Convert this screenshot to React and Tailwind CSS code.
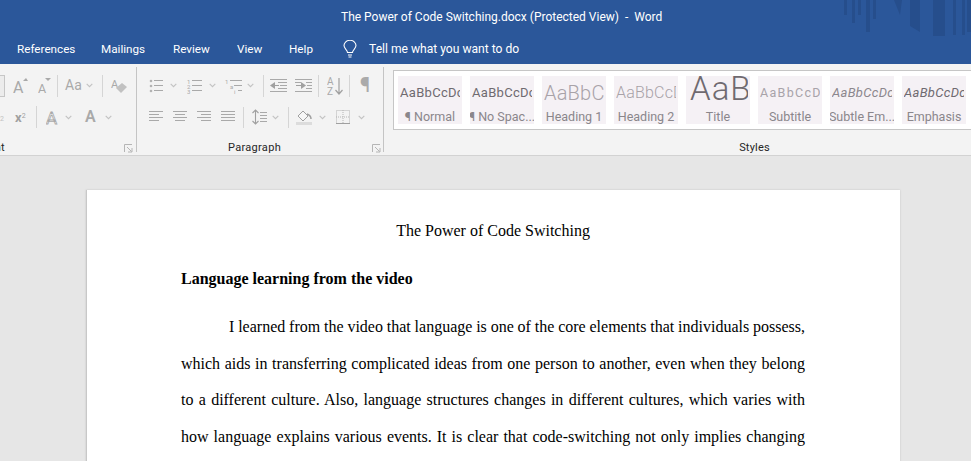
const G = '#a9a9a9';
const Chev = ({ ml = 0 }) => (
  <svg width="7" height="5" viewBox="0 0 7 5" style={{ marginLeft: ml }} className="shrink-0">
    <path d="M.7 .8 3.5 3.6 6.3 .8" fill="none" stroke="#c2c2c2" strokeWidth="1.1" />
  </svg>
);
const Sep = ({ ml, h = 22 }) => <div className="w-px bg-[#d5d5d5] shrink-0" style={{ marginLeft: ml, height: h }} />;
const Ic = ({ w, h = 16, ml = 0, children }) => (
  <svg width={w} height={h} viewBox={`0 0 ${w} ${h}`} style={{ marginLeft: ml }} className="shrink-0" fontFamily="Roboto, sans-serif">
    {children}
  </svg>
);
const Lines = ({ rows, x1 = 0, x2 = 14, c = G }) => rows.map((r, i) => {
  const [y, a, b] = Array.isArray(r) ? r : [r, x1, x2];
  return <path key={i} d={`M${a} ${y + .5}H${b}`} stroke={c} strokeWidth="1" />;
});
const Launcher = () => (
  <svg width="9" height="9" viewBox="0 0 9 9" className="shrink-0">
    <path d="M.5 8V.5H8M3 3 7.5 7.5M4 8H8V4" fill="none" stroke="#b5b5b5" strokeWidth="1" />
  </svg>
);
const styles = [
  ['AaBbCcDc', '¶ Normal', 'text-[13px] text-[#6f6a70] tracking-[.3px]'],
  ['AaBbCcDc', '¶ No Spac...', 'text-[13px] text-[#6f6a70] tracking-[.3px]'],
  ['AaBbCc', 'Heading 1', 'text-[20px] font-light text-[#a8a2a8] tracking-[.2px]'],
  ['AaBbCcD', 'Heading 2', 'text-[16px] font-light text-[#a8a2a8] tracking-[.2px]'],
  ['AaB', 'Title', 'text-[33px] font-light text-[#6f6a70] leading-none pl-[2px] tracking-[1px] -mt-[10px]'],
  ['AaBbCcD', 'Subtitle', 'text-[12.5px] text-[#a8a3a9] tracking-[1.3px]'],
  ['AaBbCcDc', 'Subtle Em...', 'text-[13px] italic text-[#8c878d] tracking-[.3px]'],
  ['AaBbCcDc', 'Emphasis', 'text-[13px] italic text-[#6f6a70] tracking-[.3px]'],
];
const paragraphs = [
  'which aids in transferring complicated ideas from one person to another, even when they belong',
  'to a different culture. Also, language structures changes in different cultures, which varies with',
  'how language explains various events. It is clear that code-switching not only implies changing',
];
const stripes = ['M844 0h3v15h-3z','M852 0h3v23h-3z','M858 0h3v15h-3z','M866 0h4v32h-4z','M873 0h3v19h-3z','M894 0h8l-2 15z','M910 0h10v32l-10-6z','M933 0h12v36h-12z','M953 0h3v35h-3z','M962 0h3v35h-3z','M967 0h4v32h-4z'];
const tabs = [['References', 'w-[84px]'], ['Mailings', 'w-[72px]'], ['Review', 'w-[64px]'], ['View', 'w-[52px]'], ['Help', 'w-[54px]']];

export default function App() {
  return (
    <div className="w-[971px] h-[461px] overflow-hidden bg-[#e6e6e6] flex flex-col font-['Roboto',sans-serif]">
      <header className="relative h-16 shrink-0 bg-[#2b579a] text-white">
        <svg width="128" height="36" viewBox="843 0 128 36" className="absolute right-0 top-0">
          {stripes.map((d, i) => <path key={i} d={d} fill="#264e8c" />)}
        </svg>
        <div className="h-[33px] pl-[341px] flex items-center text-[12px] whitespace-pre">The Power of Code Switching.docx (Protected View)  -  Word</div>
        <nav className="h-[31px] pt-[3px] pl-[17px] flex items-center text-[11.7px]">
          {tabs.map(([t, w]) => <span key={t} className={w}>{t}</span>)}
          <svg width="14" height="18" viewBox="0 0 14 18" className="shrink-0 -mt-[3px]">
            <path d="M4.5 12.5C4.5 10 1 8.5 1 5.6A6 5.3 0 0 1 13 5.6C13 8.500 9.500 10 9.500 12.500ZM5 15H9M5.500 17H8.500" fill="none" stroke="#fff" strokeWidth="1.100" />
          </svg>
          <span className="ml-3 text-[12.1px] -mt-[2px]">Tell me what you want to do</span>
        </nav>
      </header>

      <section className="h-[92px] shrink-0 bg-[#f3f3f3] border-b border-[#d2d2d2] flex text-[#262626]">
        <div className="w-[137px] shrink-0 border-r border-[#c4c4c4] my-[3px] flex flex-col">
          <div className="h-[37px] flex items-center">
            <div className="w-[5px] h-[22px] bg-[#ececec] border border-l-0 border-[#c6c6c6] shrink-0" />
            <Ic w={15} h={18} ml={8}><text x="0" y="16" fontSize="16" fill={G}>A</text><path d="M10 4 13 1 15 4Z" fill={G} /></Ic>
            <Ic w={13} h={18} ml={10}><text x="0" y="16" fontSize="12.500" fill={G}>A</text><path d="M7 1H13L10 4Z" fill={G} /></Ic>
            <Sep ml={6} />
            <span className="ml-[7px] w-[16px] text-[14px] text-[#a9a9a9]">Aa</span>
            <Chev ml={5} />
            <Sep ml={9} />
            <Ic w={16} h={18} ml={8}><text x="0" y="11" fontSize="11" fill={G}>A</text><path d="M5 11 11 6 16 10 10 16Z" fill="#c1c1c1" /></Ic>
          </div>
          <div className="h-[26px] flex items-center">
            <span className="text-[7px] text-[#c2c2c2] w-[5px] overflow-hidden mt-[4px] shrink-0">2</span>
            <span className="ml-[10px] w-[13px] text-[13px] font-bold text-[#a0a0a0] leading-none">x<sup className="text-[7px] font-normal">2</sup></span>
            <Sep ml={8} />
            <Ic w={14} h={16} ml={9}><text x="0" y="14.500" fontSize="17" fill="#fff" stroke={G} strokeWidth=".8">A</text></Ic>
            <Chev ml={5} />
            <span className="ml-[13px] w-[11px] text-[16px] font-semibold text-[#a9a9a9] leading-none">A</span>
            <Chev ml={9} />
          </div>
          <div className="mt-auto -mb-[3px] h-[14px] flex items-center justify-between pr-[3px] text-[11px]">
            <span className="-ml-[18px] tracking-[.2px]">Font</span>
            <Launcher />
          </div>
        </div>

        <div className="w-[247px] shrink-0 border-r border-[#c4c4c4] my-[3px] flex flex-col">
          <div className="h-[37px] flex items-center pl-[12px]">
            <Ic w={14} h={16}><circle cx="2" cy="3" r="1.300" fill="#b3b3b3" /><circle cx="2" cy="8" r="1.300" fill="#b3b3b3" /><circle cx="2" cy="13" r="1.300" fill="#b3b3b3" /><Lines x1={5} rows={[2, 7, 12]} /></Ic>
            <Chev ml={7} />
            <Ic w={15} h={16} ml={10}><text x="0" y="6" fontSize="6" fill={G}>1</text><text x="0" y="11" fontSize="6" fill={G}>2</text><text x="0" y="16" fontSize="6" fill={G}>3</text><Lines x1={5} x2={15} rows={[2, 7, 12]} /></Ic>
            <Chev ml={7} />
            <Ic w={18} h={16} ml={9}><text x="0" y="6" fontSize="6" fill={G}>1</text><text x="5" y="11" fontSize="6" fill={G}>a</text><text x="9" y="16" fontSize="6" fill={G}>i</text><Lines rows={[[2, 5, 17], [7, 9, 17], [12, 13, 17]]} /></Ic>
            <Chev ml={4} />
            <Sep ml={9} />
            <Ic w={17} h={14} ml={6}><path d="M0 6.500 5 3V10Z" fill="#a0a0a0" /><path d="M4 6H9V7H4Z" fill="#a0a0a0" /><Lines rows={[[0, 0, 17], [3, 8, 17], [6, 10, 17], [9, 8, 17], [12, 0, 17]]} /></Ic>
            <Ic w={17} h={14} ml={8}><path d="M11 6.500 6 3V10Z" fill="#a0a0a0" /><path d="M1 6H7V7H1Z" fill="#a0a0a0" /><Lines rows={[[0, 0, 17], [3, 0, 6], [3, 11, 17], [6, 12, 17], [9, 11, 17], [12, 0, 17]]} /></Ic>
            <Sep ml={6} />
            <Ic w={16} h={20} ml={8}><text x="0" y="9" fontSize="10" fill={G}>A</text><text x="0" y="19" fontSize="10" fill={G}>Z</text><path d="M12 2V17M8.500 14 12 18 15.500 14" fill="none" stroke="#a0a0a0" strokeWidth="1.200" /></Ic>
            <Sep ml={6} />
            <span className="ml-[10px] text-[21px] text-[#aaaaaa] leading-none">¶</span>
          </div>
          <div className="h-[26px] flex items-center pl-[12px]">
            <Ic w={14} h={12}><Lines rows={[[0, 0, 14], [3, 0, 10], [6, 0, 14], [9, 0, 10]]} /></Ic>
            <Ic w={14} h={12} ml={10}><Lines rows={[[0, 0, 14], [3, 2, 12], [6, 0, 14], [9, 2, 12]]} /></Ic>
            <Ic w={14} h={12} ml={10}><Lines rows={[[0, 0, 14], [3, 4, 14], [6, 0, 14], [9, 4, 14]]} /></Ic>
            <Ic w={14} h={12} ml={10}><Lines rows={[0, 3, 6, 9]} /></Ic>
            <Sep ml={8} h={21} />
            <Ic w={15} h={16} ml={8}><path d="M3.500 1V15M.5 4 3.500 1 6.500 4M.5 12 3.500 15 6.500 12" fill="none" stroke="#a0a0a0" strokeWidth="1.100" /><Lines x1={8} x2={15} rows={[3, 6, 9, 12]} /></Ic>
            <Chev ml={5} />
            <Sep ml={9} h={21} />
            <Ic w={16} h={16} ml={7}><path d="M2 7 7 2 12 7 7 12Z" fill="#f7f7f7" stroke="#a0a0a0" /><path d="M11 5C14 6 15 8 15 10" fill="none" stroke="#a0a0a0" strokeWidth="1.500" /><rect x="0" y="13" width="16" height="3" fill="#dcdcdc" /></Ic>
            <Chev ml={7} />
            <Ic w={14} h={14} ml={10}><rect x=".5" y=".5" width="13" height="13" fill="none" stroke="#b5b5b5" strokeDasharray="1 1" /><path d="M7 0V14M0 7H14" stroke="#b5b5b5" strokeDasharray="1 1" /><path d="M0 13.500H14" stroke="#a0a0a0" /></Ic>
            <Chev ml={8} />
          </div>
          <div className="mt-auto -mb-[3px] h-[14px] flex items-center pr-[2px] text-[11px]">
            <span className="flex-1 text-center tracking-[.3px]">Paragraph</span>
            <Launcher />
          </div>
        </div>

        <div className="flex-1 min-w-0 flex flex-col">
          <div className="ml-[9px] mt-[6px] h-[60px] bg-white border border-r-0 border-[#c6c6c6] flex gap-2 pl-1 pt-[5px] overflow-hidden">
            {styles.map(([s, l, c]) => (
              <div key={l} className="w-[64px] h-[48px] shrink-0 bg-[#f5f1f5] flex flex-col items-center overflow-hidden">
                <div className="h-[34px] w-[60px] flex items-center overflow-hidden whitespace-nowrap">
                  <span className={c}>{s}</span>
                </div>
                <div className="text-[12.5px] leading-[14px] text-[#8a868b] whitespace-nowrap">{l}</div>
              </div>
            ))}
          </div>
          <div className="mt-auto h-[14px] mb-[-1px] leading-[14px] text-center text-[11px] pl-[154px] tracking-[.2px] relative -top-px">Styles</div>
        </div>
      </section>

      <main className="flex-1 min-h-0 pt-[34px] pl-[86px]">
        <article className="w-[814px] h-[300px] bg-white border-l border-[#c8c8c8] pl-[94px] pr-[95px] pt-[30px] font-['Liberation_Serif',serif] text-[16px] text-black shadow-[0_0_2px_rgba(0,0,0,.15)]">
          <h1 className="text-center h-[22px] leading-[22px] font-normal">The Power of Code Switching</h1>
          <h2 className="mt-[26px] h-[22px] leading-[22px] font-bold">Language learning from the video</h2>
          <p className="mt-[26px] h-[22px] pl-12 leading-[22px] [word-spacing:-1px] [text-align:justify] [text-align-last:justify]">I learned from the video that language is one of the core elements that individuals possess,</p>
          {paragraphs.map(t => (
            <p key={t} className="mt-[14.5px] h-[22px] leading-[22px] [word-spacing:-1px] [text-align:justify] [text-align-last:justify]">{t}</p>
          ))}
        </article>
      </main>
    </div>
  );
}
